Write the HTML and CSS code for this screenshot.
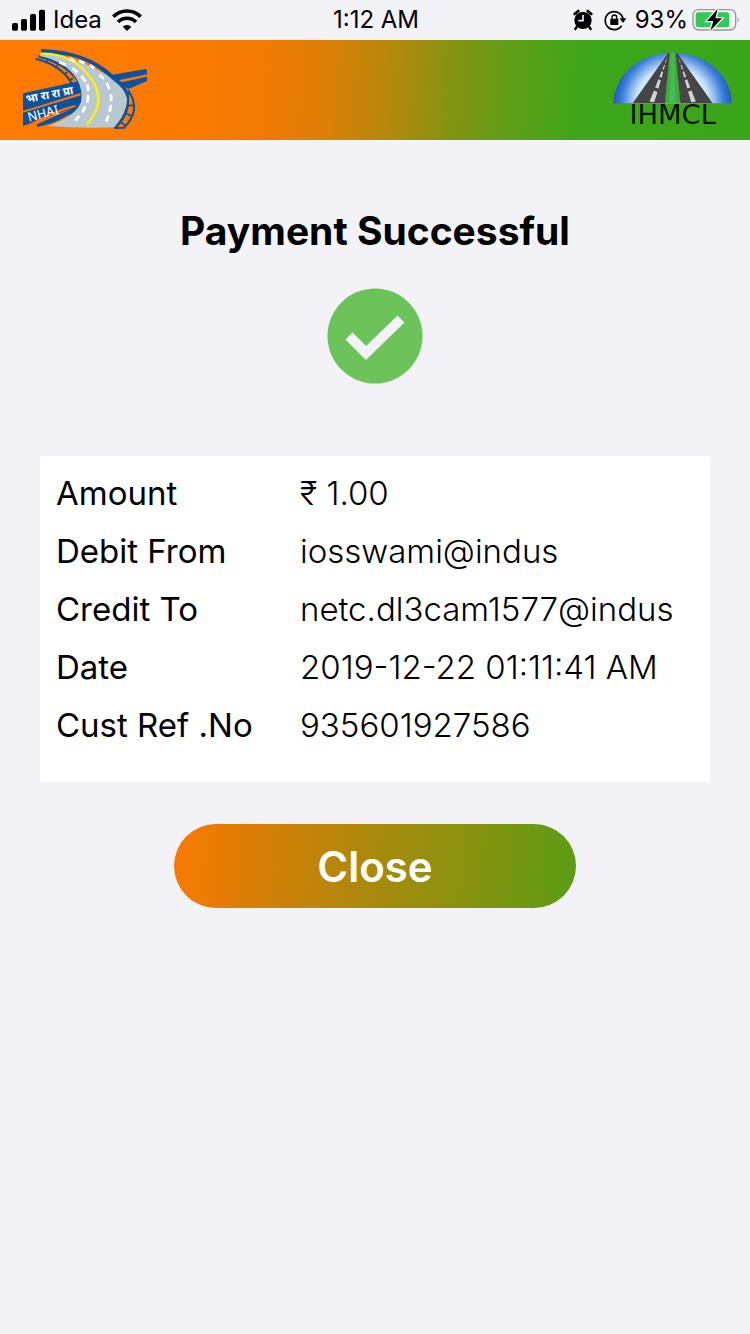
FILE: index.html
```html
<!DOCTYPE html>
<html lang="en">
<head>
<meta charset="utf-8">
<meta name="viewport" content="width=device-width, initial-scale=1">
<title>Payment Successful</title>
<link rel="stylesheet" href="styles.css">
</head>
<body>
<div class="status-bar">
  <div class="status-side">
    <svg class="signal" width="34" height="22" viewBox="0 0 102 66" aria-hidden="true">
      <rect x="0" y="42" width="18" height="23" rx="5"/><rect x="27" y="30" width="18" height="35" rx="5"/><rect x="54" y="15" width="18" height="50" rx="5"/><rect x="81" y="2" width="18" height="63" rx="5"/>
    </svg>
    <span class="carrier">Idea</span>
    <svg class="wifi" width="30" height="22" viewBox="0 0 90 66" fill="none" stroke="#000" stroke-width="11" aria-hidden="true">
      <path d="M4 23a58 58 0 0 1 82 0"/><path d="M18 39a38 38 0 0 1 54 0"/><path d="M45 66L32 53a20 20 0 0 1 26 0z" fill="#000" stroke="none"/>
    </svg>
  </div>
  <span class="clock">1:12 AM</span>
  <div class="status-side status-right">
    <svg width="20" height="22" viewBox="0 0 60 66" aria-hidden="true">
      <circle cx="30" cy="34" r="26"/>
      <path d="M5 15L16 6M55 15L44 6" stroke="#000" stroke-width="8" stroke-linecap="round"/>
      <path d="M11 54l-4 6M49 54l4 6" stroke="#000" stroke-width="7" stroke-linecap="round"/>
      <path d="M30 18v17H16" fill="none" stroke="#f2f2f7" stroke-width="5"/>
    </svg>
    <svg class="lock" width="23" height="22" viewBox="0 0 69 66" aria-hidden="true">
      <path d="M53 50A27 27 0 1 1 57 29" fill="none" stroke="#000" stroke-width="5"/>
      <path d="M47 28h20L57 42z"/><rect x="19" y="29" width="24" height="19" rx="2"/>
      <path d="M24 30v-5a7 7 0 0 1 14 0v5" fill="none" stroke="#000" stroke-width="4"/>
    </svg>
    <span class="percent">93%</span>
    <svg class="battery" width="48" height="24" viewBox="0 0 144 72" aria-hidden="true">
      <rect x="3" y="5" width="128" height="61" rx="17" fill="none" stroke="#96969b" stroke-width="4"/>
      <path d="M137 27q7 8 0 18z" fill="#96969b"/>
      <rect x="11" y="13" width="101" height="45" rx="9" fill="#34c759"/>
      <path d="M77 3L45 39h19l-9 29 35-37H70z" stroke="#f2f2f7" stroke-width="8"/>
      <path d="M77 3L45 39h19l-9 29 35-37H70z"/>
    </svg>
  </div>
</div>

<header class="brand-bar">
  <svg class="nhai" width="125" height="80" viewBox="69 147 375 240" role="img" aria-label="NHAI">
    <g fill="#0d52a0">
      <path d="M334 225L438 207q4 2 3 16L354 241z"/>
      <path d="M359 248L441 230v13L385 267z"/>
      <path d="M69 280L238 243 250 303 225 339 160 361 112 380 111 373 221 324 69 378V338L240 285 241 279 69 333z"/>
    </g>
    <path d="M70 335L242 284" stroke="#ff7900" stroke-width="4"/>
    <path d="M110 370Q152 343 231 319L222 316Q170 328 95 368z" fill="#ff7900"/>
    <path d="M111 374Q175 345 223 328Q201 352 155 370L113 381z" fill="#0d52a0"/>
    <g fill="none" stroke="#0d52a0">
      <path d="M107 176Q187 196 218 255" stroke-width="6"/>
      <path d="M116 169Q202 192 238 247" stroke-width="8"/>
      <path d="M143 177l-5 13M175 193l-10 12M202 216l-10 7M219 234l-10 8" stroke-width="5"/>
      <path d="M384 270Q426 330 372 383L344 384" stroke-width="6"/>
      <path d="M383 276v41Q374 359 343 384" stroke-width="8"/>
      <path d="M384 317l18-1M377 340l19 9M361 365l18 14" stroke-width="5"/>
    </g>
    <path d="M123 157Q187 163 206 174Q330 215 378 273Q392 322 343 382Q240 386 142 378Q226 351 243 306Q255 234 178 188Q151 174 120 168z" fill="#b9c8d0"/>
    <path d="M123 147Q260 151 340 225Q374 250 385 278L382 296Q371 262 342 243Q263 169 180 164Q148 159 124 160z" fill="#0d52a0"/>
    <path d="M121 161Q215 159 267 228Q326 302 260 375" fill="none" stroke="#fff200" stroke-width="7"/>
    <g fill="none" stroke="#fff" stroke-width="8">
      <path d="M178 187l20 8M218 205l14 13M244 228l13 17M262 252l3 21M265 285l-3 23M256 319l-9 18M238 347l-12 15"/>
      <path d="M207 174l18 9M237 182l17 8M270 195l13 10M298 224l13 12M320 248l8 19M333 283l1 20M333 315l-4 20M325 346l-6 19"/>
    </g>
    <text class="nhai-hindi" x="80" y="309" transform="rotate(-11 80 309)">भा रा रा प्रा</text>
    <text class="nhai-name" x="87" y="365" transform="rotate(-15 87 365)">NHAI</text>
  </svg>
  <svg class="ihmcl" width="120" height="74" viewBox="159 156 360 222" role="img" aria-label="IHMCL">
    <defs>
      <radialGradient id="sky" gradientUnits="userSpaceOnUse" cx="338" cy="310" r="176">
        <stop offset=".38" stop-color="#fff"/><stop offset=".62" stop-color="#cbe5fb"/><stop offset=".86" stop-color="#3f82dc"/><stop offset="1" stop-color="#2458bd"/>
      </radialGradient>
      <clipPath id="lane"><path d="M323 168L268 306h16zM354 168L393 306h15z"/></clipPath>
    </defs>
    <path d="M161 310A177 152 0 0 1 515 310z" fill="url(#sky)"/>
    <path d="M327 158h22l13 152h-48z" fill="#3fae38"/>
    <path d="M335 158h7l5 152h-20z" fill="#47b956"/>
    <path d="M324 160h5L315 310H218zM347 160h5L458 310H361z" fill="#464648"/>
    <path d="M274 306L323 173M402 306L354 173" stroke="#d1d1d1" stroke-width="16" stroke-dasharray="35 10 26 8 18 7 14 6" fill="none" clip-path="url(#lane)"/>
    <text class="ihmcl-name" x="338" y="372" text-anchor="middle">IHMCL</text>
  </svg>
</header>

<main class="receipt">
  <h1 class="title">Payment Successful</h1>
  <svg class="tick" width="96" height="96" viewBox="0 0 96 96" aria-hidden="true">
    <circle cx="48" cy="48" r="47.500" fill="#6bc35a"/>
    <path d="M22 48L39 65 74 31" fill="none" stroke="#f2f2f7" stroke-width="10"/>
  </svg>
  <table class="details">
    <tbody>
      <tr><th scope="row">Amount</th><td>₹ 1.00</td></tr>
      <tr><th scope="row">Debit From</th><td>iosswami@indus</td></tr>
      <tr><th scope="row">Credit To</th><td>netc.dl3cam1577@indus</td></tr>
      <tr><th scope="row">Date</th><td>2019-12-22 01:11:41 AM</td></tr>
      <tr><th scope="row">Cust Ref .No</th><td>935601927586</td></tr>
    </tbody>
  </table>
  <button class="close" type="button">Close</button>
</main>
</body>
</html>
```
FILE: styles.css
```css
* {
  box-sizing: border-box;
}

body {
  margin: 0;
  background: #f2f2f7;
  color: #000;
  font-family: Inter, Roboto, "Noto Sans", sans-serif;
}

.status-bar {
  display: grid;
  grid-template-columns: 1fr auto 1fr;
  align-items: center;
  height: 40px;
  padding: 0 10px 0 12px;
  font-size: 24px;
  line-height: 40px;
}

.status-side {
  display: flex;
  align-items: center;
}

.status-right {
  justify-content: flex-end;
}

.carrier {
  margin: 0 10px 0 7px;
}

.lock {
  margin: 0 8px 0 11px;
}

.battery {
  margin-left: 4px;
}

.brand-bar {
  display: flex;
  align-items: center;
  justify-content: space-between;
  height: 100px;
  padding: 0 17px 2px 23px;
  background: linear-gradient(93deg, #ff7a00 0%, #fd7a01 22%, #f17904 35%, #de7f07 43%, #b4880c 52%, #859312 60%, #5ca019 69%, #3da61a 77%, #3ba51a 100%);
}

.ihmcl {
  overflow: visible;
}

.nhai-hindi {
  fill: #fff;
  font: 700 34px "Noto Sans Devanagari", "Noto Sans", sans-serif;
}

.nhai-name {
  fill: #fff;
  font: 400 38px "Noto Sans", sans-serif;
}

.ihmcl-name {
  fill: #0b120b;
  font: 400 82px "DejaVu Sans", sans-serif;
}

.receipt {
  display: flex;
  flex-direction: column;
  align-items: center;
  padding: 66px 40px 40px;
}

.title {
  margin: 0;
  font-size: 39px;
  font-weight: 700;
  line-height: 50px;
}

.tick {
  margin-top: 32px;
}

.details {
  width: 100%;
  margin-top: 72px;
  padding: 8px 16px 28px;
  border-spacing: 0;
  background: #fff;
  font-size: 33px;
  line-height: 58px;
  text-align: left;
}

.details th,
.details td {
  padding: 0;
}

.details th {
  width: 244px;
  font-weight: 400;
}

.details td {
  font-weight: 300;
}

.close {
  width: 60%;
  height: 84px;
  margin-top: 42px;
  border: 0;
  border-radius: 42px;
  background: linear-gradient(93deg, #fb7900 0%, #d97e07 20%, #a88a0c 50%, #859310 75%, #5a9d15 100%);
  color: #fff;
  font: 600 42px Inter, Roboto, sans-serif;
}
```
